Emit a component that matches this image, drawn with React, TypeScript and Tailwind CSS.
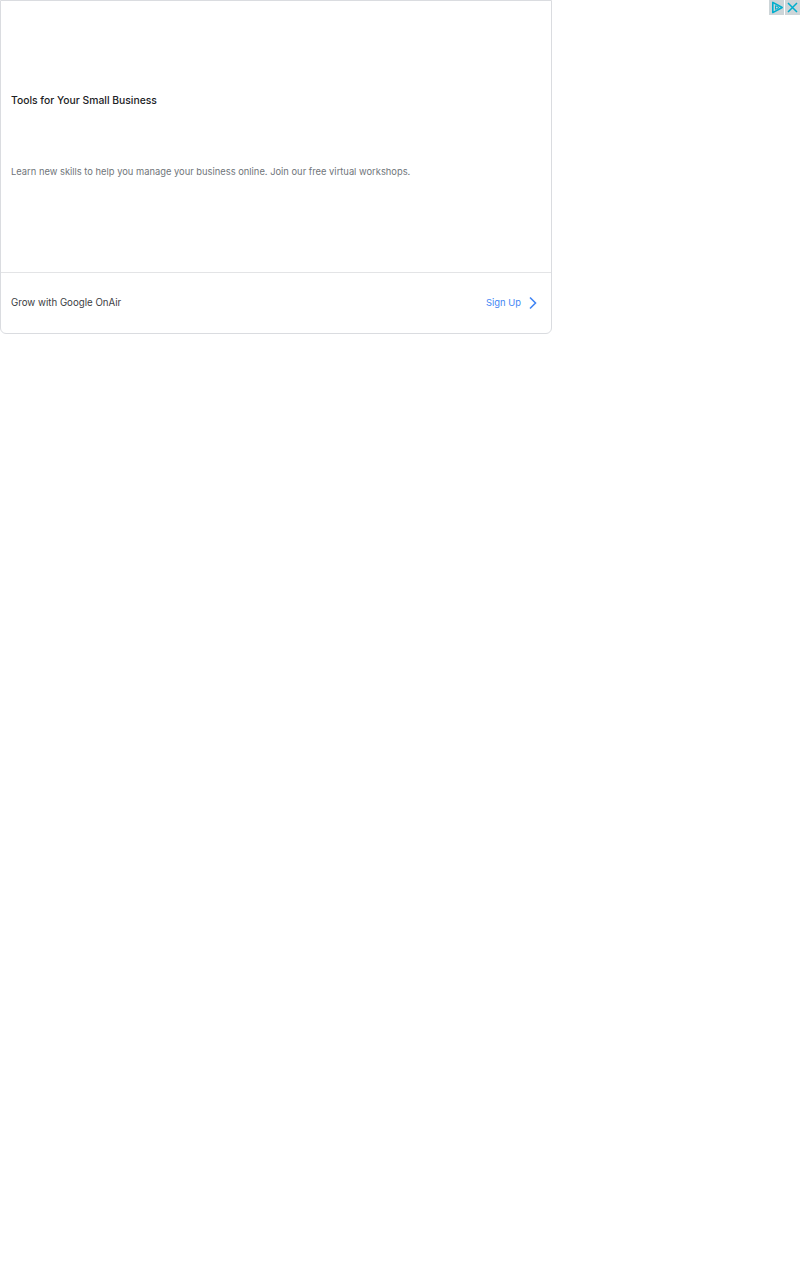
const App = () => {
    return (
        <div className="relative min-h-[1280px] bg-white font-['Inter',sans-serif]">
            <div className="flex h-[334px] w-[552px] flex-col rounded-b-[6px] border border-[#dadce0]">
                <div className="flex h-[272px] flex-col gap-[58px] border-b border-[#e3e4e6] pt-[92px] pl-[10px]">
                    <h3 className="text-[10.35px] leading-[14px] font-medium text-[#202124]">
                        Tools for Your Small Business
                    </h3>
                    <p className="text-[9.35px] leading-[14px] text-[#70757a]">
                        Learn new skills to help you manage your business online. Join our free virtual workshops.
                    </p>
                </div>
                <div className="flex flex-1 items-center justify-between pr-[13px] pl-[10px]">
                    <span className="text-[9.7px] text-[#3c4043]">Grow with Google OnAir</span>
                    <a className="flex items-center gap-[7px] text-[9.4px] text-[#4285f4]">
                        Sign Up
                        <svg width="10" height="14" viewBox="0 0 10 14" fill="none" stroke="#4285f4" strokeWidth="1.6">
                            <path d="M2 1.5 L7.5 7 L2 12.5" />
                        </svg>
                    </a>
                </div>
            </div>

            <div className="absolute top-0 right-0 flex gap-px">
                <div className="flex h-[15px] w-[15px] items-center justify-center bg-[#cdd5d8]">
                    <svg width="15" height="15" viewBox="0 0 15 15" fill="none" stroke="#00aecd" strokeWidth="1.6" strokeLinejoin="round">
                        <path d="M3.8 2.4 L3.8 12.6 L13.2 7.5 Z" />
                        <path d="M6.5 5.6 L6.5 9.4 L10 7.5 Z" strokeWidth="1" />
                    </svg>
                </div>
                <div className="flex h-[15px] w-[15px] items-center justify-center bg-[#cdd5d8]">
                    <svg width="15" height="15" viewBox="0 0 15 15" fill="none" stroke="#00aecd" strokeWidth="1.5">
                        <path d="M3 3 L12 12 M12 3 L3 12" />
                    </svg>
                </div>
            </div>
        </div>
    );
};

export default App
